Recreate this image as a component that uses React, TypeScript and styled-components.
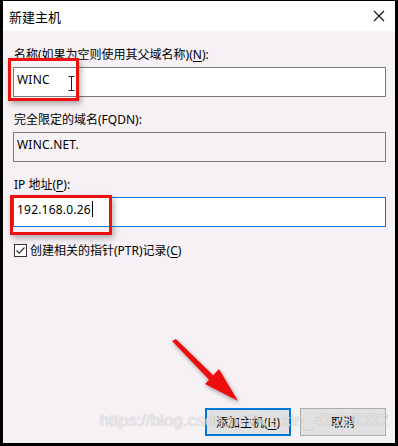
import styled, { createGlobalStyle } from "styled-components";

const GlobalStyle = createGlobalStyle`
  html, body {
    margin: 0;
    padding: 0;
    background: #000;
  }
  body {
    font-family: "Noto Sans", "Noto Sans CJK SC", sans-serif;
  }
`;

const FONT = `"Noto Sans", "Noto Sans CJK SC", sans-serif`;

export default function App() {
  return (
    <>
      <GlobalStyle />
      <Frame>
        <TitleBar>
          <Title>新建主机</Title>
          <CloseIcon viewBox="0 0 12 12">
            <path d="M1 1 L11 11 M11 1 L1 11" stroke="#111" strokeWidth="1.1" />
          </CloseIcon>
        </TitleBar>
        <Body>
          <Field>
            <Label>
              名称(如果为空则使用其父域名称)(<u>N</u>):
            </Label>
            <Input>
              WINC
              <IBeam viewBox="0 0 7 15">
                <path d="M0.5 0.5 H6.5 M3.5 0.5 V14.5 M0.5 14.5 H6.5" stroke="#222" strokeWidth="1" fill="none" />
              </IBeam>
            </Input>
          </Field>
          <Field>
            <Label>完全限定的域名(FQDN):</Label>
            <Input readOnly>WINC.NET.</Input>
          </Field>
          <Field>
            <Label>
              IP 地址(<u>P</u>):
            </Label>
            <Input focused>
              192.168.0.26
              <Caret />
            </Input>
          </Field>
          <CheckRow>
            <CheckBox viewBox="0 0 13 13">
              <rect x="0.5" y="0.5" width="12" height="12" fill="#fff" stroke="#333" />
              <path d="M2.5 6.5 L5.2 9.2 L10.5 3.5" stroke="#333" strokeWidth="1.2" fill="none" />
            </CheckBox>
            <span>
              创建相关的指针(PTR)记录(<u>C</u>)
            </span>
          </CheckRow>
          <ButtonRow>
            <Button primary>
              添加主机(<u>H</u>)
            </Button>
            <Button>取消</Button>
          </ButtonRow>
        </Body>

        <Highlight style={{ left: 5, top: 57, width: 71, height: 43 }} />
        <Highlight style={{ left: 7, top: 194, width: 102, height: 40 }} />

        <Arrow viewBox="0 0 398 446">
          <defs>
            <filter id="sh" x="-20%" y="-20%" width="140%" height="140%">
              <feDropShadow dx="1" dy="2" stdDeviation="2" floodColor="#000" floodOpacity="0.35" />
            </filter>
          </defs>
          <g filter="url(#sh)" fill="#ee1111">
            <path d="M172 341 L176 339 L220 382 L215 386 Z" />
            <path d="M238 401 L205 384 L219 369 Z" />
          </g>
        </Arrow>

        <Watermark>https://blog.csdn.net/weixin_42256332</Watermark>
      </Frame>
    </>
  );
}

const Frame = styled.div`
  position: relative;
  width: 392px;
  height: 442px;
  border-style: solid;
  border-color: #000;
  border-width: 1px 3px 3px 3px;
  background: #f6f1f4;
  display: flex;
  flex-direction: column;
  overflow: hidden;
`;

const TitleBar = styled.div`
  height: 30px;
  background: #fff;
  display: flex;
  align-items: center;
  justify-content: space-between;
  padding: 0 10px 0 6px;
`;

const Title = styled.div`
  font-family: ${FONT};
  font-size: 13px;
  color: #000;
`;

const CloseIcon = styled.svg`
  width: 12px;
  height: 12px;
`;

const Body = styled.div`
  flex: 1;
  display: flex;
  flex-direction: column;
  padding: 15px 9px 7px 10px;
  font-family: ${FONT};
  font-size: 12px;
  color: #000;
`;

const Field = styled.div`
  display: flex;
  flex-direction: column;
  margin-bottom: 14px;
`;

const Label = styled.div`
  height: 18px;
  line-height: 18px;
  margin-bottom: 3px;
  padding-left: 1px;
  white-space: nowrap;

  u {
    text-underline-offset: 2px;
  }
`;

const Input = styled.div<{ readOnly?: boolean; focused?: boolean }>`
  position: relative;
  height: 30px;
  box-sizing: border-box;
  display: flex;
  align-items: center;
  padding: 0 0 6px 3px;
  border: 1px solid ${(p) => (p.focused ? "#0078d7" : "#7a7a7a")};
  background: ${(p) => (p.readOnly ? "#f6f1f4" : "#fff")};
  letter-spacing: 0.2px;
`;

const IBeam = styled.svg`
  position: absolute;
  left: 54px;
  top: 8px;
  width: 7px;
  height: 15px;
`;

const Caret = styled.span`
  display: inline-block;
  width: 1px;
  height: 16px;
  margin-left: 1px;
  background: #000;
`;

const CheckRow = styled.div`
  display: flex;
  align-items: center;
  gap: 3px;
  height: 18px;
  padding-left: 1px;

  u {
    text-underline-offset: 2px;
  }
`;

const CheckBox = styled.svg`
  width: 13px;
  height: 13px;
`;

const ButtonRow = styled.div`
  margin-top: auto;
  display: flex;
  justify-content: flex-end;
  gap: 9px;
`;

const Button = styled.div<{ primary?: boolean }>`
  width: 86px;
  height: 28px;
  box-sizing: border-box;
  display: flex;
  align-items: center;
  justify-content: center;
  background: #e1e1e1;
  border: ${(p) => (p.primary ? "2px solid #0078d7" : "1px solid #adadad")};
  font-size: 12px;

  u {
    text-underline-offset: 2px;
  }
`;

const Highlight = styled.div`
  position: absolute;
  box-sizing: border-box;
  border: 3px solid #ee1111;
  box-shadow: 2px 3px 6px rgba(0, 0, 0, 0.3);
`;

const Arrow = styled.svg`
  position: absolute;
  left: -3px;
  top: -1px;
  width: 398px;
  height: 446px;
  pointer-events: none;
`;

const Watermark = styled.div`
  position: absolute;
  right: 6px;
  top: 410px;
  font-family: "Liberation Sans", Arial, sans-serif;
  font-size: 17px;
  color: rgba(255, 255, 255, 0.75);
  text-shadow: 0 0 1px rgba(0, 0, 0, 0.35);
  white-space: nowrap;
  pointer-events: none;
`;
